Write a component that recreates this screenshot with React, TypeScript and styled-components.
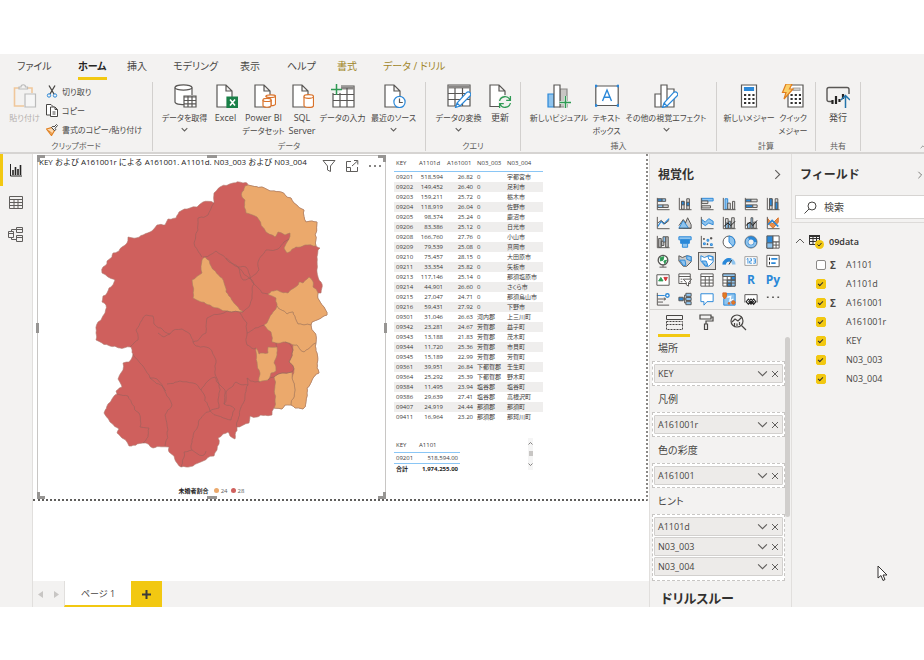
import React from "react";
import styled, { createGlobalStyle, css } from "styled-components";

const INK = "#484644";
const BLUE = "#2b88d8";
const PALE = "#8fc4ee";
const GREY = "#a19f9d";
const YELLOW = "#f2c811";
const RED = "#cf605d";
const ORANGE = "#eba96c";

const GlobalStyle = createGlobalStyle`
  *, *::before, *::after { box-sizing: border-box; }
  body {
    margin: 0;
    background: #fff;
    color: #484644;
    font-family: "Open Sans", "Noto Sans CJK JP", sans-serif;
    font-size: 9px;
    font-feature-settings: "palt";
  }
  button, input { font: inherit; color: inherit; font-feature-settings: inherit; }
  button { background: none; border: 0; padding: 0; margin: 0; }
  h2, h3, p { margin: 0; }
  svg { display: block; flex: none; }
`;

/* ---------- shell ---------- */

const Page = styled.div`
  height: 100vh;
  padding: 54px 0 53px;
  display: flex;
  flex-direction: column;
`;

const AppWindow = styled.div`
  position: relative;
  flex: 1;
  min-height: 0;
  display: flex;
  flex-direction: column;
  background: #f3f2f1;
  overflow: hidden;
`;

const Workspace = styled.div`
  flex: 1;
  min-height: 0;
  display: flex;
`;

/* ---------- ribbon ---------- */

const TabBar = styled.nav`
  display: flex;
  height: 28px;
  padding-left: 12px;
`;

const Tab = styled.button<{ $width: number; $active?: boolean; $accent?: boolean }>`
  position: relative;
  flex: 0 0 ${(p) => p.$width}px;
  height: 24px;
  padding: 0 5px;
  text-align: left;
  white-space: nowrap;
  font-size: 10px;
  line-height: 24px;
  font-weight: ${(p) => (p.$active ? 700 : 400)};
  color: ${(p) => (p.$accent ? "#a08528" : p.$active ? "#252423" : INK)};
  span {
    display: inline-block;
    height: 26px;
    border-bottom: 3px solid ${(p) => (p.$active ? YELLOW : "transparent")};
  }
`;

const Ribbon = styled.div`
  display: flex;
  height: 72px;
  border-bottom: 2px solid #d6d4d2;
`;

const Group = styled.section<{ $width: number }>`
  flex: 0 0 ${(p) => p.$width}px;
  height: 69px;
  border-right: 1px solid #d2d0ce;
  display: flex;
  flex-direction: column;
  justify-content: space-between;
`;

const GroupBody = styled.div<{ $start?: boolean }>`
  display: flex;
  justify-content: ${(p) => (p.$start ? "flex-start" : "center")};
  padding-left: ${(p) => (p.$start ? 3 : 0)}px;
`;

const GroupLabel = styled.div`
  text-align: center;
  font-size: 8px;
  line-height: 10px;
  color: #605e5c;
`;

const BigButton = styled.button<{ $width: number; $faded?: boolean }>`
  flex: 0 0 ${(p) => p.$width}px;
  min-width: 0;
  padding-top: 2px;
  display: flex;
  flex-direction: column;
  align-items: center;
  line-height: 13px;
  white-space: nowrap;
  color: ${(p) => (p.$faded ? "#b3b0ad" : INK)};
  svg:first-child { margin-bottom: 3px; }
  svg:last-child { margin-top: 2px; }
`;

const ToolLabel = styled.span<{ $kana: boolean }>`
  font-size: ${(p) => (p.$kana ? 8 : 9)}px;
`;

const SmallList = styled.div`
  display: flex;
  flex-direction: column;
`;

const SmallButton = styled.button`
  display: flex;
  align-items: center;
  gap: 4px;
  height: 19px;
  font-size: 8px;
  white-space: nowrap;
`;

const Collapse = styled.button`
  margin: auto 0 2px auto;
  width: 4px;
  line-height: 8px;
  overflow: hidden;
`;

/* ---------- view rail ---------- */

const Rail = styled.nav`
  flex: 0 0 33px;
  display: flex;
  flex-direction: column;
  border-right: 1px solid #e1dfdd;
`;

const RailButton = styled.button<{ $active?: boolean }>`
  height: 32px;
  display: flex;
  align-items: center;
  justify-content: center;
  padding-right: 4px;
  border-left: 3px solid ${(p) => (p.$active ? YELLOW : "transparent")};
`;

/* ---------- canvas ---------- */

const CanvasColumn = styled.main`
  flex: 1;
  min-width: 0;
  display: flex;
  flex-direction: column;
  background: #fff;
`;

const ReportPage = styled.div`
  flex: 0 0 347px;
  display: flex;
  gap: 8px;
  padding: 1px 0 0 4px;
  margin-right: 1px;
  border-right: 2px dotted #8a8886;
  border-bottom: 2px dotted #605e5c;
`;

const MapVisual = styled.article`
  position: relative;
  flex: 0 0 349px;
  display: flex;
  flex-direction: column;
  border: 1px solid #c8c6c4;
  border-bottom: 0;
`;

const VisualHeader = styled.header`
  display: flex;
  justify-content: space-between;
  height: 23px;
  padding: 0 3px 0 1px;
`;

const VisualTitle = styled.h3`
  font-size: 8px;
  font-weight: 400;
  line-height: 11px;
  white-space: nowrap;
  font-feature-settings: normal;
  color: #252423;
`;

const VisualTools = styled.div`
  display: flex;
  align-items: center;
  padding-bottom: 4px;
  gap: 9px;
`;

const Handle = styled.i<{ $at: string }>`
  position: absolute;
  ${(p) =>
    ({
      tl: css`top: -1px; left: -1px; width: 8px; height: 7px; border-top: 3px solid #979593; border-left: 3px solid #979593;`,
      tr: css`top: -1px; right: -1px; width: 8px; height: 7px; border-top: 3px solid #979593; border-right: 3px solid #979593;`,
      bl: css`bottom: 0; left: -1px; width: 8px; height: 7px; border-bottom: 3px solid #979593; border-left: 3px solid #979593;`,
      br: css`bottom: 0; right: -1px; width: 8px; height: 7px; border-bottom: 3px solid #979593; border-right: 3px solid #979593;`,
      t: css`top: -1px; left: calc(50% - 5px); width: 10px; height: 3px; background: #979593;`,
      b: css`bottom: 0; left: calc(50% - 5px); width: 10px; height: 3px; background: #979593;`,
      l: css`left: -2px; top: calc(50% - 5px); width: 3px; height: 10px; background: #979593;`,
      r: css`right: -2px; top: calc(50% - 5px); width: 3px; height: 10px; background: #979593;`,
    })[p.$at]}
`;

const MapDrawing = styled.svg`
  width: 100%;
  height: auto;
`;

const Legend = styled.div`
  display: flex;
  align-items: center;
  justify-content: center;
  gap: 2px;
  margin-top: auto;
  height: 17px;
  font-size: 6px;
  color: #605e5c;
  strong { color: #252423; margin-right: 2px; }
`;

const Dot = styled.i<{ $color: string }>`
  width: 5px;
  height: 5px;
  margin-left: 1px;
  border-radius: 50%;
  background: ${(p) => p.$color};
`;

const TableColumn = styled.div`
  display: flex;
  flex-direction: column;
  padding-top: 1px;
`;

const DataTable = styled.table`
  border-collapse: collapse;
  table-layout: fixed;
  font-size: 6px;
  line-height: 8px;
  color: #3b3a39;
  white-space: nowrap;
  th, td { padding: 1px 2px; height: 10px; text-align: left; font-weight: 400; }
  td.num { text-align: right; }
`;

const CityTable = styled(DataTable)`
  width: 149px;
  thead th { height: 15px; border-bottom: 1px solid #8ac6f5; }
  tbody tr:nth-child(even) { background: #efeeed; }
`;

const TotalRow = styled.div`
  display: flex;
  justify-content: space-between;
  width: 139px;
  margin-top: 16px;
`;

const TotalTable = styled(DataTable)`
  width: 66px;
  thead th { height: 15px; border-bottom: 1px solid #8ac6f5; }
  tbody td { height: 11px; border-bottom: 1px solid #8ac6f5; }
  tfoot td { font-weight: 700; color: #252423; }
`;

const MiniScroll = styled.div`
  width: 5px;
  height: 32px;
  display: flex;
  flex-direction: column;
  align-items: center;
  justify-content: space-between;
  padding: 3px 0;
  background: #f5f5f5;
  i { width: 4px; height: 5px; background: #c8c6c4; }
`;

const PageTabs = styled.footer`
  margin-top: auto;
  display: flex;
  height: 26px;
  background: #f3f2f1;
`;

const Pager = styled.div`
  width: 31px;
  display: flex;
  align-items: center;
  justify-content: space-around;
`;

const PageTab = styled.button`
  width: 67px;
  background: #fff;
  border-left: 1px solid #e1dfdd;
  border-bottom: 2px solid ${YELLOW};
`;

const AddPage = styled.button`
  width: 31px;
  display: flex;
  align-items: center;
  justify-content: center;
  background: ${YELLOW};
`;

/* ---------- panes ---------- */

const Pane = styled.aside<{ $width: number }>`
  flex: 0 0 ${(p) => p.$width}px;
  display: flex;
  flex-direction: column;
  min-width: 0;
  overflow: hidden;
  border-left: 1px solid #e1dfdd;
`;

const PaneHeader = styled.header<{ $edge?: boolean }>`
  flex: none;
  display: flex;
  align-items: center;
  justify-content: space-between;
  height: 41px;
  padding: 0 ${(p) => (p.$edge ? 0 : 8)}px 0 8px;
  h2 {
    font-size: 12px;
    line-height: 20px;
    font-feature-settings: normal;
    color: #323130;
  }
`;

const VisualGrid = styled.div`
  flex: none;
  display: grid;
  grid-template-columns: repeat(6, 1fr);
  grid-auto-rows: 19px;
  padding: 0 7px 0 2px;
`;

const VisualButton = styled.button<{ $selected?: boolean }>`
  display: flex;
  align-items: center;
  justify-content: center;
  width: 18px;
  height: 18px;
  margin: 0 auto;
  border: 1px solid ${(p) => (p.$selected ? "#605e5c" : "transparent")};
  background: ${(p) => (p.$selected ? "#e1dfdd" : "none")};
`;

const FormatTabs = styled.div`
  flex: none;
  display: flex;
  height: 28px;
  padding-left: 8px;
  border-top: 1px solid #d6d4d2;
`;

const FormatTab = styled.button<{ $active?: boolean }>`
  width: 32px;
  display: flex;
  align-items: center;
  justify-content: center;
  border-bottom: 3px solid ${(p) => (p.$active ? YELLOW : "transparent")};
`;

const WellScroller = styled.div`
  flex: 1;
  min-height: 0;
  display: flex;
`;

const Wells = styled.div`
  flex: 1;
  padding-left: 2px;
  h2 { padding: 9px 9px 0; font-size: 13px; line-height: 16px; color: #323130; }
`;

const WellName = styled.h3`
  padding: 0 6px;
  height: 24px;
  line-height: 22px;
  font-size: 10px;
  font-weight: 400;
  margin-top: 2px;
  &:first-child { margin-top: 0; }
`;

const Well = styled.div<{ $tall?: boolean }>`
  display: flex;
  flex-direction: column;
  gap: 1px;
  padding: 2px 1px ${(p) => (p.$tall ? 4 : 2)}px;
  border: 1px dashed #c8c6c4;
  background: #fff;
`;

const WellItem = styled.div`
  display: flex;
  align-items: center;
  gap: 3px;
  height: 19px;
  padding: 0 3px;
  border: 1px solid #d2d0ce;
  border-radius: 1px;
  background: #edebe9;
  span { flex: 1; }
`;

const Scrollbar = styled.div`
  flex: 0 0 6px;
  i {
    display: block;
    width: 5px;
    height: 180px;
    border-radius: 3px;
    background: #d0cecc;
  }
`;

const SearchBox = styled.label`
  flex: none;
  display: flex;
  align-items: center;
  gap: 7px;
  height: 24px;
  margin-left: 3px;
  padding-left: 8px;
  border: 1px solid #d6d4d2;
  border-right: 0;
  background: #fff;
  input {
    flex: 1;
    min-width: 0;
    border: 0;
    padding: 0;
    outline: 0;
    font-size: 10px;
    background: none;
  }
  input::placeholder { color: #484644; opacity: 1; }
`;

const FieldTree = styled.div`
  margin-top: 3px;
  padding: 8px 0 0 3px;
  border-top: 1px solid #dddbd9;
`;

const TableNode = styled.button`
  display: flex;
  align-items: center;
  height: 20px;
  gap: 4px;
  font-weight: 600;
  color: #323130;
`;

const TreeRow = styled.label`
  display: flex;
  align-items: center;
  height: 19px;
  padding-left: 21px;
  &:first-of-type { margin-top: 4px; }
  i { width: 20px; padding-left: 4px; font-style: normal; font-weight: 700; font-size: 10px; }
`;

const Check = styled.input`
  appearance: none;
  flex: none;
  width: 10px;
  height: 10px;
  margin: 0;
  border: 1px solid #8a8886;
  border-radius: 2px;
  background: #fff;
  &:checked {
    border-color: ${YELLOW};
    background: ${YELLOW};
  }
  &:checked::after {
    content: "";
    display: block;
    width: 5px;
    height: 3px;
    margin: 2px 1px;
    border-left: 1px solid #323130;
    border-bottom: 1px solid #323130;
    transform: rotate(-45deg);
  }
`;

const Pointer = styled.svg`
  position: absolute;
  right: 36px;
  bottom: 25px;
`;

/* ---------- small glyphs ---------- */

const Chevron = ({ dir, size = 8, width = 1 }: { dir: "up" | "down" | "left" | "right"; size?: number; width?: number }) => {
  const d = {
    up: "M1 7L5 3L9 7",
    down: "M1 3L5 7L9 3",
    left: "M7 1L3 5L7 9",
    right: "M3 1L7 5L3 9",
  }[dir];
  return (
    <svg width={size} height={size} viewBox="0 0 10 10" fill="none" stroke="#605e5c" strokeWidth={width}>
      <path d={d} />
    </svg>
  );
};

const Cross = () => (
  <svg width="8" height="8" viewBox="0 0 8 8" stroke="#605e5c" fill="none">
    <path d="M1 1L7 7M7 1L1 7" />
  </svg>
);

/* ---------- ribbon icons ---------- */

const Big = ({ children }: { children: React.ReactNode }) => (
  <svg width="24" height="24" viewBox="0 0 24 24" fill="none" stroke="#595755" strokeWidth="1.2">
    {children}
  </svg>
);

const Sheet = () => <path d="M3 1H12L18 7V23H3ZM12 1V7H18" fill="#fff" />;
const Cylinder = () => (
  <g stroke="#d9722a" fill="#fff">
    <path d="M14 12.5V21.5C14 24 23.500 24 23.500 21.5V12.5" />
    <ellipse cx="18.750" cy="12.5" rx="4.750" ry="1.8" />
  </g>
);
const Pencil = () => <path d="M23.2 8.800C22 7.500 20.500 7.500 19.500 8.600L10 19L8.500 23.500L13 22L23 12C24 11 24 9.800 23.2 8.800ZM10 19L13 22" fill="#fff" stroke={BLUE} />;

const bigIcons: Record<string, React.ReactNode> = {
  paste: (
    <Big>
      <path d="M7 4H1.500V22H11M15 4H19V9" stroke="#f0c79b" strokeWidth="1.6" />
      <path d="M6 5V3H8C8 0 12.500 0 12.500 3H14.500V5Z" stroke="#bbb" fill="#f3f2f1" />
      <path d="M12 10H22.5V23H12Z" stroke="#bbb" fill="#f6f6f6" />
    </Big>
  ),
  getData: (
    <Big>
      <path d="M2 3.5V18C3 21 9 20.5 11 20.5V12H19V3.5" fill="#fff" stroke="none" />
      <path d="M2 3.5V18C2 20 7 20.7 11 20.5M19 3.5V11" />
      <ellipse cx="10.500" cy="3.5" rx="8.500" ry="2.7" fill="#fff" />
      <path d="M11 12H23V23H11Z" fill="#fff" />
      <path d="M11 13H23M11 16.5H23M11 19.8H23M15 12V23M19 12V23" />
    </Big>
  ),
  excel: (
    <Big>
      <Sheet />
      <path d="M13 13H24V24H13Z" fill="#1a8048" stroke="#1a8048" />
      <path d="M16 15.5L21 21.5M21 15.5L16 21.5" stroke="#fff" strokeWidth="1.6" />
    </Big>
  ),
  powerbi: (
    <Big>
      <Sheet />
      <g stroke="#d9722a" fill="#fff">
        <path d="M14 13V12C14 10.4 23.500 10.4 23.500 12V20C23.500 21.5 20.5 21.8 19 21.6V16C19 14.5 15 14 14 14.2" />
        <path d="M14 12.2C15 14 22.500 14 23.500 12.2" />
        <path d="M11 16V21.500C11 23.8 19 23.8 19 21.500V16" />
        <ellipse cx="15" cy="15.900" rx="4" ry="1.6" />
      </g>
    </Big>
  ),
  sql: (
    <Big>
      <Sheet />
      <Cylinder />
    </Big>
  ),
  enter: (
    <Big>
      <path d="M2 2H23V23H2Z" fill="#fff" />
      <path d="M6 4H23" strokeWidth="3" stroke="#8a8886" />
      <path d="M2 10.500H23M2 16.500H23M9 4V23M16 4V23" />
      <path d="M0 0H10V9H0Z" fill="#f3f2f1" stroke="none" />
      <path d="M5.500 0V11M0 5.500H11" stroke="#2f9a54" strokeWidth="1.5" />
    </Big>
  ),
  recent: (
    <Big>
      <Sheet />
      <circle cx="17.5" cy="18" r="5.600" fill="#fff" stroke={BLUE} />
      <path d="M17.5 14.500V18.500H20.8" />
    </Big>
  ),
  transform: (
    <Big>
      <path d="M1 1H23V22H1Z" fill="#fff" />
      <path d="M1 3H23" strokeWidth="3" stroke="#8a8886" />
      <path d="M1 9.500H23M1 15.500H23M8 4V22M15.500 4V22" />
      <Pencil />
    </Big>
  ),
  refresh: (
    <Big>
      <path d="M2 1H11L17 7V22.500H2ZM11 1V7H17" fill="#fff" />
      <circle cx="17" cy="18" r="7" fill="#f3f2f1" stroke="none" />
      <path d="M11.6 17C12.5 12 20 11 22 16M22.4 12V16.3H18.2M22.4 19C21.5 24 14 25 12 20M11.6 24V19.6H15.8" stroke="#2f9a54" strokeWidth="1.3" />
    </Big>
  ),
  newVisual: (
    <Big>
      <path d="M1 10H7V23H1Z" fill={PALE} stroke={BLUE} />
      <path d="M13 5H20V23H13Z" fill="#c8c6c4" stroke="#8a8886" />
      <path d="M7 1H13V23H7Z" fill="#fff" />
      <path d="M18.500 12V24M12.500 18.500H24" stroke="#f3f2f1" strokeWidth="3" />
      <path d="M18.500 12V24M12.500 18.500H24" stroke="#2f9a54" strokeWidth="1.5" />
    </Big>
  ),
  textbox: (
    <Big>
      <path d="M0.8 2H23.2V21.5H0.8Z" fill="#fff" />
      <path d="M7.5 17L12 6L16.5 17M9 13.2H15" stroke={BLUE} strokeWidth="1.4" />
      <path d="M0 1H2V3H0ZM22 1H24V3H22ZM0 20.5H2V22.5H0ZM22 20.5H24V22.5H22Z" stroke={BLUE} fill={BLUE} strokeWidth="0.6" />
    </Big>
  ),
  more: (
    <Big>
      <path d="M1 10H7V23H1ZM13 5H20V23H13ZM7 1H13V23H7Z" fill="#fff" />
      <Pencil />
    </Big>
  ),
  measure: (
    <Big>
      <path d="M4.500 1H19.500V23H4.500Z" fill="#fff" />
      <path d="M7.500 3.500H16.500V6.500H7.500Z" fill={BLUE} stroke={BLUE} />
      <path d="M7 11H17.5M7 15H17.5M7 19H17.5" strokeWidth="2.200" strokeDasharray="2.200 2" stroke="#323130" />
    </Big>
  ),
  quick: (
    <Big>
      <path d="M7 1H22V23H7Z" fill="#fff" />
      <path d="M12 4H19V6.500H12Z" fill="#ccc" stroke="#aaa" />
      <path d="M9.500 11H20M9.500 15H20M9.500 19H20" strokeWidth="2.200" strokeDasharray="2.200 2" stroke="#323130" />
      <path d="M5 0H11L8.500 5H12L3 15L5 8.500H1.500Z" fill="#fbd06a" stroke="#e07f1f" />
    </Big>
  ),
  publish: (
    <Big>
      <path d="M7 17.500H3Q1 17.500 1 15.500V5.500Q1 3.500 3 3.500H21Q23 3.500 23 5.500V10" strokeWidth="1.400" />
      <path d="M6.500 20V16M10 20V12M13.500 18V15M17 15V10" strokeWidth="2.200" stroke="#252423" />
      <path d="M19.500 24V11.500M15 16L19.500 11.500L24 16" stroke="#2374ab" strokeWidth="1.500" />
    </Big>
  ),
};

const CutIcon = () => (
  <svg width="12" height="13" viewBox="0 0 12 13" fill="none" stroke={INK}>
    <path d="M3 0.500L8 9M9 0.500L4 9" strokeWidth="1.300" />
    <circle cx="3" cy="10.500" r="1.700" stroke={BLUE} />
    <circle cx="9" cy="10.500" r="1.700" stroke={BLUE} />
  </svg>
);
const CopyIcon = () => (
  <svg width="12" height="13" viewBox="0 0 12 13" stroke={INK} fill="#fff">
    <path d="M0.500 0.500H5L7 2.500V11H0.500Z" />
    <path d="M4.500 3H9L11.500 5.500V12.500H4.500ZM9 3V5.500H11.500M6.500 8H9.500M6.500 10H9.500" />
  </svg>
);
const BrushIcon = () => (
  <svg width="12" height="12" viewBox="0 0 12 12" fill="none" stroke={INK}>
    <path d="M0.500 5L6 3.500L8.500 6.500L5.500 11.500Z" fill="#fbd9b0" stroke="#e07f1f" strokeWidth="1.200" />
    <path d="M2.500 6.500L6 9.500" stroke="#e07f1f" />
    <path d="M5.500 3.500L8.500 6.500L10 5.500L9 4.300L11.500 1.500L10.500 0.500L8 3L7 2.200Z" fill="#fff" />
  </svg>
);

type Tool = { icon: string; lines: string[]; width: number; menu?: boolean; faded?: boolean };
const groups: { name: string; width: number; tools: Tool[] }[] = [
  {
    name: "データ",
    width: 273,
    tools: [
      { icon: "getData", lines: ["データを取得"], width: 52, menu: true },
      { icon: "excel", lines: ["Excel"], width: 30 },
      { icon: "powerbi", lines: ["Power BI", "データセット"], width: 46 },
      { icon: "sql", lines: ["SQL", "Server"], width: 31 },
      { icon: "enter", lines: ["データの入力"], width: 50 },
      { icon: "recent", lines: ["最近のソース"], width: 52, menu: true },
    ],
  },
  {
    name: "クエリ",
    width: 95,
    tools: [
      { icon: "transform", lines: ["データの変換"], width: 54, menu: true },
      { icon: "refresh", lines: ["更新"], width: 29 },
    ],
  },
  {
    name: "挿入",
    width: 196,
    tools: [
      { icon: "newVisual", lines: ["新しいビジュアル"], width: 62 },
      { icon: "textbox", lines: ["テキスト", "ボックス"], width: 33 },
      { icon: "more", lines: ["その他の視覚エフェクト"], width: 86, menu: true },
    ],
  },
  {
    name: "計算",
    width: 99,
    tools: [
      { icon: "measure", lines: ["新しいメジャー"], width: 54 },
      { icon: "quick", lines: ["クイック", "メジャー"], width: 34 },
    ],
  },
  { name: "共有", width: 45, tools: [{ icon: "publish", lines: ["発行"], width: 30 }] },
];

const tabs: { name: string; width: number; active?: boolean; accent?: boolean }[] = [
  { name: "ファイル", width: 61 },
  { name: "ホーム", width: 49, active: true },
  { name: "挿入", width: 46 },
  { name: "モデリング", width: 67 },
  { name: "表示", width: 47 },
  { name: "ヘルプ", width: 50 },
  { name: "書式", width: 46, accent: true },
  { name: "データ / ドリル", width: 80, accent: true },
];

const hasKana = (s: string) => /[\u3040-\u30ff]/.test(s);

const ToolButton = ({ icon, lines, width, menu, faded }: Tool) => (
  <BigButton $width={width} $faded={faded}>
    {bigIcons[icon]}
    {lines.map((l) => (
      <ToolLabel key={l} $kana={hasKana(l)}>{l}</ToolLabel>
    ))}
    {menu && <Chevron dir="down" size={7} width={1.500} />}
  </BigButton>
);

/* ---------- map ---------- */

type Pt = [number, number];

const parse = (s: string): Pt[] => s.split(" ").map((p) => p.split(",").map(Number) as Pt);

const wobble = (n: number) => {
  const v = Math.sin(n * 12.9898) * 43758.5453;
  return (v - Math.floor(v)) * 2 - 1;
};

/* Splits each edge in short pieces and shifts the joints, the same way for a
   border whichever of its two areas is being drawn. */
const crinkle = (a: Pt, b: Pt, depth: number): Pt[] => {
  const len = Math.hypot(b[0] - a[0], b[1] - a[1]);
  if (depth === 0 || len < 4) return [b];
  const key = a[0] + b[0] + (a[1] + b[1]) * 1.7;
  const amp = Math.min(1.3, len * 0.13);
  const m: Pt = [(a[0] + b[0]) / 2 + wobble(key) * amp, (a[1] + b[1]) / 2 + wobble(key + 5) * amp];
  return [...crinkle(a, m, depth - 1), ...crinkle(m, b, depth - 1)];
};

const outline = (s: string, closed: boolean) => {
  const pts = parse(s);
  if (closed) pts.push(pts[0]);
  const out = [pts[0]];
  for (let i = 1; i < pts.length; i++) out.push(...crinkle(pts[i - 1], pts[i], 4));
  return "M" + out.map((p) => `${p[0].toFixed(1)} ${p[1].toFixed(1)}`).join("L") + (closed ? "Z" : "");
};

const prefecture =
  "190,208 197,207 203,202 214,203 214,193 220,187 233,183 243,183 247,183 248,185 262,187 272,191 281,192 291,198 294,203 304,210 306,222 312,221 317,222 316,246 320,248 318,250 317,272 321,282 321,293 318,293 319,300 324,307 327,315 312,322 311,325 314,332 316,343 317,353 317,368 319,373 312,380 307,388 306,402 303,409 295,408 291,405 285,405 282,409 274,408 272,415 257,417 250,416 249,423 237,427 235,439 230,436 228,432 223,434 218,438 219,444 217,450 214,456 203,461 193,466 181,467 177,463 174,456 169,452 169,447 153,448 143,443 129,446 127,442 122,438 117,433 119,429 110,422 104,413 108,404 117,394 116,391 122,387 118,379 123,370 123,363 129,362 133,354 131,347 120,348 110,346 102,343 96,340 96,333 98,322 101,320 105,313 106,305 102,302 103,296 107,293 109,288 111,287 115,280 108,277 102,273 103,267 106,265 107,261 112,257 113,253 119,251 122,247 127,243 128,237 136,238 143,235 153,230 157,225 165,225 168,219 176,218 179,212 187,209";

const lowShare = [
  "248,185 262,187 272,191 281,192 291,198 294,203 304,210 306,222 312,221 317,222 316,246 305,245 296,247 287,253 284,248 289,239 290,233 285,235 278,232 275,237 266,232 257,217 246,213 245,200 242,197 242,192 245,186",
  "205,257 211,266 222,278 226,292 238,307 243,312 227,311 210,305 193,298 192,280 202,273 202,260",
  "268,294 277,290 288,293 294,288 299,282 303,283 309,277 312,280 313,287 318,293 319,300 324,307 327,315 312,322 311,325 304,325 298,324 293,312 287,314 277,306 277,304 276,298",
  "277,306 287,314 293,312 298,324 304,325 311,325 314,332 316,343 304,352 297,345 293,345 285,342 276,343 272,342 272,340 271,332 264,325 273,312",
  "293,345 297,345 304,352 316,343 317,353 317,368 319,373 312,380 307,388 306,402 303,409 295,408 291,405 295,390 292,378 294,369 289,362 293,350",
  "274,377 284,373 292,372 292,378 295,390 291,405 285,405 282,409 274,408",
  "256,348 259,354 268,353 268,347 277,347 277,355 274,363 276,371 271,373 268,380 259,382 260,373 257,362",
];

const borders = [
  "214,203 208,215 198,218 198,230 194,243 202,257",
  "203,257 216,251 222,255 229,262 238,267 243,280 250,278",
  "238,267 246,267 250,278 254,284",
  "226,258 238,267 248,277 254,284",
  "250,278 259,270 258,262 266,250 278,249 284,242 289,239",
  "254,284 262,293 268,294",
  "254,284 252,295 250,305 243,312",
  "240,313 247,323 247,335 247,345 254,349 256,348",
  "247,333 255,328 264,325",
  "243,312 227,311 213,315 207,318 206,333 200,338 193,342 190,334 182,329 174,330 170,334",
  "170,334 161,328 154,324 153,316 146,315 142,320 136,330 138,340 130,347",
  "170,334 164,337 158,333",
  "193,342 196,346 209,348 216,360 215,374 219,384",
  "133,354 143,366 150,378 164,388 172,405 165,415 168,430 165,446",
  "150,378 157,379 166,391",
  "167,384 180,381 193,383 201,390 209,380 215,377 219,384 219,408 210,411 201,390",
  "219,384 225,390 224,404 235,409 231,420 210,411 199,420 192,440 192,450",
  "224,404 226,392 236,382 248,385 247,378 255,382 260,382",
  "248,385 240,410 237,427",
  "117,394 128,396 139,413 140,427 149,428 148,437 143,443",
  "181,467 184,452 192,450 204,455 206,451",
  "277,347 276,343",
  "285,342 290,344 293,350 289,362 294,369 292,372 284,373 274,377 268,380",
];

/* ---------- report data ---------- */

const cities: [string, string, string, string, string][] = [
  ["09201", "518,594", "26.82", "0", "宇都宮市"],
  ["09202", "149,452", "26.40", "0", "足利市"],
  ["09203", "159,211", "25.72", "0", "栃木市"],
  ["09204", "118,919", "26.04", "0", "佐野市"],
  ["09205", "98,374", "25.24", "0", "鹿沼市"],
  ["09206", "83,386", "25.12", "0", "日光市"],
  ["09208", "166,760", "27.76", "0", "小山市"],
  ["09209", "79,539", "25.08", "0", "真岡市"],
  ["09210", "75,457", "28.15", "0", "大田原市"],
  ["09211", "33,354", "25.82", "0", "矢板市"],
  ["09213", "117,146", "25.14", "0", "那須塩原市"],
  ["09214", "44,901", "26.60", "0", "さくら市"],
  ["09215", "27,047", "24.71", "0", "那須烏山市"],
  ["09216", "59,431", "27.92", "0", "下野市"],
  ["09301", "31,046", "26.63", "河内郡", "上三川町"],
  ["09342", "23,281", "24.67", "芳賀郡", "益子町"],
  ["09343", "13,188", "21.83", "芳賀郡", "茂木町"],
  ["09344", "11,720", "25.36", "芳賀郡", "市貝町"],
  ["09345", "15,189", "22.99", "芳賀郡", "芳賀町"],
  ["09361", "39,951", "26.84", "下都賀郡", "壬生町"],
  ["09364", "25,292", "25.39", "下都賀郡", "野木町"],
  ["09384", "11,495", "23.94", "塩谷郡", "塩谷町"],
  ["09386", "29,639", "27.41", "塩谷郡", "高根沢町"],
  ["09407", "24,919", "24.44", "那須郡", "那須町"],
  ["09411", "16,964", "23.20", "那須郡", "那珂川町"],
];

/* ---------- visual gallery ---------- */

const axis = <path d="M1.500 1V14.500H15.500" />;
const filled = { stroke: BLUE, fill: PALE };

const visuals: { name: string; art: React.ReactNode }[] = [
  { name: "積み上げ横棒", art: <><path d="M2 2H7V5H2Z" fill={BLUE} /><path d="M7 2H11V5H7ZM2 9H8V12H2Z" fill={PALE} /><path d="M8 9H14V12H8Z" fill="#ccc" />{axis}</> },
  { name: "積み上げ縦棒", art: <><path d="M4 5H7V14H4ZM10 2H13V14H10Z" fill="#ddd" /><path d="M4 5H7V9H4ZM10 6H13V10H10Z" fill={BLUE} />{axis}</> },
  { name: "集合横棒", art: <><path d="M2 1.500H15V4.500H2Z" {...filled} /><path d="M2 4.500H9V7.500H2ZM2 10H12V12.500H2Z" fill="#ddd" />{axis}</> },
  { name: "集合縦棒", art: <><path d="M3.500 2H6.500V14H3.500Z" {...filled} /><path d="M6.500 7H9.500V14H6.500ZM12 5H14.500V14H12Z" fill="#ddd" />{axis}</> },
  { name: "100% 横棒", art: <><path d="M2 2.500H8V5.500H2ZM2 9H10V12H2Z" fill={BLUE} /><path d="M8 2.500H15V5.500H8ZM10 9H15V12H10Z" fill="#ddd" />{axis}</> },
  { name: "100% 縦棒", art: <><path d="M4 2H7V14H4ZM10.500 2H13.500V14H10.500Z" fill="#ddd" /><path d="M4 2H7V10H4ZM10.500 6H13.500V14H10.500Z" fill={BLUE} />{axis}</> },
  { name: "折れ線", art: <><path d="M2 12L6 6L9 9L15 3" stroke={BLUE} strokeWidth="1.500" /><path d="M2 8L6 5L10 9L15 5" />{axis}</> },
  { name: "面", art: <><path d="M6 14L11 2L15 10V14Z" fill="#ccc" /><path d="M1 14L6 5L12 14Z" {...filled} /><path d="M1 14H15M1 11L6 4L9 8" /></> },
  { name: "積み上げ面", art: <><path d="M2 4L6 7L10 3L15 6V10L10 8L6 11L2 8Z" fill={PALE} stroke={BLUE} />{axis}</> },
  { name: "折れ線と積み上げ", art: <><path d="M4 3H7V14H4ZM11 2H14V14H11Z" fill="#ddd" /><path d="M4 8H7V14H4ZM7.500 6H10V14H7.500Z" fill={PALE} /><path d="M2 12L7 8L10 11L15 6" stroke="#222" />{axis}</> },
  { name: "折れ線と集合", art: <><path d="M4 8H7V14H4ZM8 2H10V14H8Z" fill={PALE} /><path d="M11 7H14V14H11Z" fill="#ddd" /><path d="M2 11L7 7L10 11L15 5" stroke="#222" />{axis}</> },
  { name: "リボン", art: <><path d="M2 3L7 9L14 2V7L8 14L2 8Z" fill="#e9904a" stroke="#d9722a" /><path d="M2 10L7 5L14 12" stroke={BLUE} strokeWidth="2" />{axis}</> },
  { name: "ウォーターフォール", art: <><path d="M3 4H6V14H3ZM6 7H9V12H6ZM11 2H14V14H11Z" fill="#bbb" /><path d="M8 2H11V8H8Z" fill={PALE} />{axis}</> },
  { name: "じょうご", art: <><path d="M1 2H15V5.500H1Z" fill={PALE} stroke={BLUE} /><path d="M3 5.500H13V9.500H3Z" fill={BLUE} stroke={BLUE} /><path d="M5 9.500H11V14H5Z" {...filled} /></> },
  { name: "散布図", art: <><path d="M4 9H6V11H4ZM8 5H10V7H8ZM12 10H14V12H12Z" {...filled} /><path d="M12 3H13.500V4.500H12ZM8 10H9V11H8ZM4 4H5V5H4Z" fill="#222" />{axis}</> },
  { name: "円", art: <><circle cx="8" cy="8" r="6.800" fill="#fff" /><path d="M8 8V1.200A6.800 6.800 0 0 1 12.500 13Z" {...filled} /></> },
  { name: "ドーナツ", art: <><circle cx="8" cy="8" r="5" stroke={BLUE} strokeWidth="4" /><circle cx="8" cy="8" r="5" stroke={PALE} strokeWidth="2.500" strokeDasharray="20 12" /><circle cx="8" cy="8" r="7" strokeWidth="0.700" /></> },
  { name: "ツリーマップ", art: <><path d="M1 1H8V15H1Z" fill={BLUE} /><path d="M8 1H15V8H8Z" fill="#fff" /><path d="M1 9H8V15H1Z" fill={PALE} /><path d="M8 8H15V15H8ZM11.500 8V15M8 11.500H15" fill="#fff" /></> },
  { name: "マップ", art: <><circle cx="8" cy="7" r="5.500" fill="#fff" strokeWidth="1.500" /><path d="M5 4L9 3L8 7L5 8ZM9 8L12 7L10 11Z" fill="#2f9a54" stroke="#2f9a54" /><path d="M4 15H12M8 12V15" /></> },
  { name: "塗り分け地図", art: <><path d="M1 2L5 4L10 2L15 3V9L10 14H6L1 8Z" fill="#ccc" /><path d="M2 7L8 7L9 13L6 13ZM10 2L15 3V8L10 6Z" fill={PALE} stroke={BLUE} /></> },
  { name: "図形マップ", art: <><path d="M1 2L5 4L10 2L15 3V9L10 14H6L1 8Z" fill="#fff" stroke={BLUE} /><path d="M9 2L14 3V7L10 6Z" fill="#fff" stroke={BLUE} /><path d="M2 8H7L9 13H6Z" {...filled} /></> },
  { name: "ゲージ", art: <><path d="M2.500 12A5.500 5.500 0 0 1 13.500 12" stroke={PALE} strokeWidth="4" /><path d="M2.500 12A5.500 5.500 0 0 1 10 7" stroke={BLUE} strokeWidth="4" /><path d="M8 12L11 7" stroke="#222" /></> },
  { name: "カード", art: <><path d="M1 3H15V13H1Z" fill="#fff" stroke={GREY} /><path d="M3 6L4.500 5V11M6.500 5.500H8.500V8H6.500V10.500H9M10.500 5.500H13V8H11M13 8V10.500H10.500" stroke={BLUE} strokeWidth="1" /></> },
  { name: "複数行カード", art: <><path d="M1 1.500H15V14.500H1Z" fill="#fff" /><path d="M4 4V7M4 9V12" stroke="#222" /><path d="M6 5.500H13M6 10.500H11" stroke={BLUE} strokeWidth="2" /></> },
  { name: "KPI", art: <><path d="M1 2H15V14H1Z" fill="#fff" /><path d="M3 9L5.500 5L8 9Z" fill="#2f9a54" stroke="#2f9a54" /><path d="M9 5H13L11 9Z" fill="#d13438" stroke="#d13438" /></> },
  { name: "スライサー", art: <><path d="M1 1H14V12H1ZM1 4H14M3 7H5M3 10H5" fill="#fff" /><path d="M6 7H15.500L12 11V15L9.500 13.500V11Z" fill="#fff" /></> },
  { name: "テーブル", art: <path d="M1 1H15V15H1ZM1 4H15M1 8H15M1 11.500H15M6 4V15M10.500 4V15" fill="#fff" /> },
  { name: "マトリックス", art: <><path d="M1 1H15V15H1Z" fill="#fff" /><path d="M1 1H15V4H1ZM6 8H15V15H6Z" fill={PALE} /><path d="M10.500 4H15V8H10.500ZM6 11.500H10.500V15H6Z" fill={BLUE} /><path d="M1 8H15M1 11.500H15M6 4V15M10.500 4V15" /></> },
  { name: "R", art: null },
  { name: "Py", art: null },
  { name: "主要な影響元", art: <><path d="M1 4H10" stroke={BLUE} /><circle cx="13" cy="4" r="2" stroke={BLUE} fill="#fff" strokeWidth="1.500" /><path d="M2 8H11M2 11.500H8M9 6.500L11 8L9 9.500M1.500 1V15H15" /></> },
  { name: "分解ツリー", art: <><path d="M1 6H6V10H1Z" fill={BLUE} /><path d="M9 1.500H15V5H9ZM9 6.300H15V9.700H9ZM9 11H15V14.500H9Z" fill={PALE} /><path d="M6 8H9M7.500 3.500V12.500M7.500 3.500H9M7.500 12.500H9" /></> },
  { name: "Q&A", art: <path d="M1 2H15V11H8L4.500 15V11H1Z" fill="#fff" stroke={BLUE} /> },
  { name: "ArcGIS", art: <><path d="M5 2H15V15H2V8Z" fill={PALE} stroke={BLUE} /><path d="M6 6L10 5L9 10L13 8" stroke="#fff" strokeWidth="1.500" /><path d="M1 1H5V5L3 8L1 5Z" fill="#e07f1f" stroke="#d9622a" /><circle cx="13" cy="12" r="2" fill="#e07f1f" stroke="#d9622a" /><circle cx="8" cy="13" r="1" fill="#e07f1f" stroke="#d9622a" /></> },
  { name: "Power Apps", art: <><path d="M1 12V3H15V12" fill="#fff" /><path d="M5 8L2.500 11L5 14L8 11ZM8 8L5.500 11L8 14L11 11ZM11 8L8.500 11L11 14L13.500 11Z" stroke="#222" strokeWidth="1.300" /></> },
  { name: "その他", art: <path d="M1 6H3M7 6H9M13 6H15" strokeWidth="1.700" /> },
];

const Letters = styled.b`
  font-size: 12px;
  line-height: 14px;
  font-weight: 700;
  color: ${BLUE};
`;

const wells = [
  { name: "場所", items: ["KEY"] },
  { name: "凡例", items: ["A161001r"] },
  { name: "色の彩度", items: ["A161001"] },
  { name: "ヒント", items: ["A1101d", "N03_003", "N03_004"] },
];

const fields = [
  { name: "A1101", on: false, sum: true },
  { name: "A1101d", on: true },
  { name: "A161001", on: true, sum: true },
  { name: "A161001r", on: true },
  { name: "KEY", on: true },
  { name: "N03_003", on: true },
  { name: "N03_004", on: true },
];

export default function App() {
  return (
    <Page>
      <GlobalStyle />
      <AppWindow>
        <TabBar>
          {tabs.map((t) => (
            <Tab key={t.name} $width={t.width} $active={t.active} $accent={t.accent}>
              <span>{t.name}</span>
            </Tab>
          ))}
        </TabBar>
        <Ribbon>
          <Group $width={153}>
            <GroupBody $start>
              <ToolButton icon="paste" lines={["貼り付け"]} width={43} faded />
              <SmallList>
                <SmallButton><CutIcon />切り取り</SmallButton>
                <SmallButton><CopyIcon />コピー</SmallButton>
                <SmallButton><BrushIcon />書式のコピー/貼り付け</SmallButton>
              </SmallList>
            </GroupBody>
            <GroupLabel>クリップボード</GroupLabel>
          </Group>
          {groups.map((g) => (
            <Group key={g.name} $width={g.width}>
              <GroupBody>
                {g.tools.map((t) => (
                  <ToolButton key={t.icon} {...t} />
                ))}
              </GroupBody>
              <GroupLabel>{g.name}</GroupLabel>
            </Group>
          ))}
          <Collapse aria-label="リボンを折りたたむ"><Chevron dir="up" size={6} /></Collapse>
        </Ribbon>

        <Workspace>
          <Rail>
            <RailButton $active aria-label="レポート">
              <svg width="12" height="13" viewBox="0 0 12 13" stroke="#252423" fill="none">
                <path d="M0.500 0V12H12" />
                <path d="M3 11V6M5.500 11V3M8 11V5M10.500 11V1" strokeWidth="1.600" />
              </svg>
            </RailButton>
            <RailButton aria-label="データ">
              <svg width="14" height="13" viewBox="0 0 14 13" stroke="#605e5c" fill="none">
                <path d="M0.500 0.500H13.500V12.500H0.500ZM0.500 3.500H13.500M0.500 6.500H13.500M0.500 9.500H13.500M5 3.500V12.500M9 3.500V12.500" />
              </svg>
            </RailButton>
            <RailButton aria-label="モデル">
              <svg width="15" height="15" viewBox="0 0 15 15" stroke="#605e5c" fill="none">
                <path d="M0.500 4.500H5.500V10.500H0.500ZM0.500 6.500H5.500M8.500 0.500H14.500V5.500H8.500ZM8.500 2.500H14.500M8.500 8.500H14.500V14.500H8.500ZM8.500 10.500H14.500M3.500 4.500V2.500H8.500M3.500 10.500V12.500H8.500" />
              </svg>
            </RailButton>
          </Rail>

          <CanvasColumn>
            <ReportPage>
              <MapVisual>
                <VisualHeader>
                  <VisualTitle>KEY および A161001r による A161001. A1101d. N03_003 および N03_004</VisualTitle>
                  <VisualTools>
                    <svg width="14" height="14" viewBox="0 0 14 14" fill="none" stroke="#605e5c">
                      <path d="M1 1.500H13L8.500 7V12.500L5.500 11V7Z" />
                    </svg>
                    <svg width="14" height="14" viewBox="0 0 14 14" fill="none" stroke="#605e5c">
                      <path d="M6 2.500H1.500V12.500H12.500V8M1.500 8.500H5.500V12.500M7 7L12.500 2M9 1.500H12.800V5.500" />
                    </svg>
                    <svg width="14" height="14" viewBox="0 0 14 14" stroke="#605e5c">
                      <path d="M1 7H3M6 7H8M11 7H13" strokeWidth="1.500" />
                    </svg>
                  </VisualTools>
                </VisualHeader>
                <MapDrawing viewBox="38 179 347 300">
                  <path d={outline(prefecture, true)} fill={RED} stroke="#b07a70" strokeWidth="0.600" />
                  {lowShare.map((a) => (
                    <path key={a} d={outline(a, true)} fill={ORANGE} stroke="#a8805f" strokeWidth="0.600" />
                  ))}
                  {borders.map((b) => (
                    <path key={b} d={outline(b, false)} fill="none" stroke="#97605c" strokeWidth="0.600" />
                  ))}
                </MapDrawing>
                <Legend>
                  <strong>未婚者割合</strong>
                  <Dot $color={ORANGE} />24
                  <Dot $color={RED} />28
                </Legend>
                {["tl", "t", "tr", "l", "r", "bl", "b", "br"].map((h) => (
                  <Handle key={h} $at={h} />
                ))}
              </MapVisual>

              <TableColumn>
                <CityTable>
                  <colgroup>
                    <col width="23" /><col width="28" /><col width="30" /><col width="30" /><col width="38" />
                  </colgroup>
                  <thead>
                    <tr><th>KEY</th><th>A1101d</th><th>A161001</th><th>N03_003</th><th>N03_004</th></tr>
                  </thead>
                  <tbody>
                    {cities.map(([key, pop, rate, gun, city]) => (
                      <tr key={key}>
                        <td>{key}</td><td className="num">{pop}</td><td className="num">{rate}</td><td>{gun}</td><td>{city}</td>
                      </tr>
                    ))}
                  </tbody>
                </CityTable>
                <TotalRow>
                  <TotalTable>
                    <colgroup><col width="23" /><col width="43" /></colgroup>
                    <thead><tr><th>KEY</th><th>A1101</th></tr></thead>
                    <tbody><tr><td>09201</td><td className="num">518,594.00</td></tr></tbody>
                    <tfoot><tr><td>合計</td><td className="num">1,974,255.00</td></tr></tfoot>
                  </TotalTable>
                  <MiniScroll>
                    <Chevron dir="up" size={5} width={1.500} />
                    <i />
                    <Chevron dir="down" size={5} width={1.500} />
                  </MiniScroll>
                </TotalRow>
              </TableColumn>
            </ReportPage>
            <PageTabs>
              <Pager>
                <svg width="5" height="7" viewBox="0 0 5 7" fill="#c8c6c4"><path d="M5 0V7L0 3.500Z" /></svg>
                <svg width="5" height="7" viewBox="0 0 5 7" fill="#c8c6c4"><path d="M0 0V7L5 3.500Z" /></svg>
              </Pager>
              <PageTab>ページ 1</PageTab>
              <AddPage aria-label="ページを追加">
                <svg width="9" height="9" viewBox="0 0 9 9" stroke="#3b3a39" strokeWidth="2"><path d="M4.500 0V9M0 4.500H9" /></svg>
              </AddPage>
            </PageTabs>
          </CanvasColumn>

          <Pane $width={142}>
            <PaneHeader>
              <h2>視覚化</h2>
              <Chevron dir="right" size={11} />
            </PaneHeader>
            <VisualGrid>
              {visuals.map((v) => (
                <VisualButton key={v.name} aria-label={v.name} $selected={v.name === "図形マップ"}>
                  {v.art ? (
                    <svg width="14" height="14" viewBox="0 0 16 16" fill="none" stroke="#595755" strokeWidth="1.100">{v.art}</svg>
                  ) : (
                    <Letters>{v.name}</Letters>
                  )}
                </VisualButton>
              ))}
            </VisualGrid>
            <FormatTabs>
              <FormatTab $active aria-label="フィールド">
                <svg width="17" height="16" viewBox="0 0 17 16" fill="none" stroke={INK}>
                  <path d="M0.500 1.500H16.500V5.500H0.500Z" />
                  <path d="M0.500 7.500H16.500V10.500H0.500ZM0.500 10.500V15.500H16.500V10.500" strokeDasharray="2 1" />
                </svg>
              </FormatTab>
              <FormatTab aria-label="書式">
                <svg width="15" height="16" viewBox="0 0 15 16" fill="none" stroke={INK} strokeWidth="1.200">
                  <path d="M1 1H12V5H1ZM12 3H14V7H7V10M5.500 10H8.500V15.500H5.500Z" />
                </svg>
              </FormatTab>
              <FormatTab aria-label="分析">
                <svg width="17" height="17" viewBox="0 0 17 17" fill="none" stroke={INK} strokeWidth="1.200">
                  <circle cx="7" cy="7" r="6" />
                  <path d="M11.500 11.500L16 16M2 8L5 5L8 7L12 3M4.500 12V9M7 12V9.500M9.500 11V8" />
                </svg>
              </FormatTab>
            </FormatTabs>
            <WellScroller>
              <Wells>
                {wells.map((w) => (
                  <React.Fragment key={w.name}>
                    <WellName>{w.name}</WellName>
                    <Well $tall={w.items.length > 1}>
                      {w.items.map((i) => (
                        <WellItem key={i}>
                          <span>{i}</span>
                          <button aria-label={`${i} のメニュー`}><Chevron dir="down" size={11} /></button>
                          <button aria-label={`${i} を削除`}><Cross /></button>
                        </WellItem>
                      ))}
                    </Well>
                  </React.Fragment>
                ))}
                <h2>ドリルスルー</h2>
              </Wells>
              <Scrollbar><i /></Scrollbar>
            </WellScroller>
          </Pane>

          <Pane $width={133}>
            <PaneHeader $edge>
              <h2>フィールド</h2>
              <Chevron dir="right" size={8} />
            </PaneHeader>
            <SearchBox>
              <svg width="13" height="13" viewBox="0 0 13 13" fill="none" stroke={INK}>
                <circle cx="8" cy="5" r="4" />
                <path d="M5 8L0.500 12.500" />
              </svg>
              <input placeholder="検索" aria-label="検索" />
            </SearchBox>
            <FieldTree>
              <TableNode>
                <Chevron dir="up" size={10} />
                <svg width="16" height="16" viewBox="0 0 16 16" fill="none" stroke="#323130">
                  <path d="M0.500 3H10.500V11.500H0.500ZM0.500 5.500H10.500M0.500 8.500H10.500M4 3V11.500M7.500 3V11.500" />
                  <path d="M0 3H11" strokeWidth="2" />
                  <circle cx="10.500" cy="11.500" r="4.500" fill={YELLOW} stroke="none" />
                  <path d="M8.500 11.500L10 13L12.500 10" />
                </svg>
                09data
              </TableNode>
              {fields.map((f) => (
                <TreeRow key={f.name}>
                  <Check type="checkbox" defaultChecked={f.on} />
                  <i>{f.sum ? "Σ" : ""}</i>
                  {f.name}
                </TreeRow>
              ))}
            </FieldTree>
          </Pane>
        </Workspace>
        <Pointer width="11" height="17" viewBox="0 0 11 17" fill="#fff" stroke="#323130">
          <path d="M1 1V13L4 10.500L6 15.500L8 14.500L6 10H10Z" />
        </Pointer>
      </AppWindow>
    </Page>
  );
}
